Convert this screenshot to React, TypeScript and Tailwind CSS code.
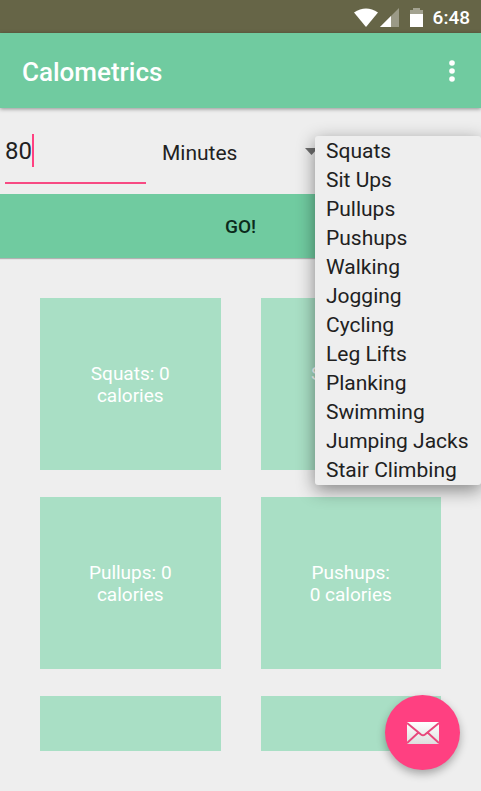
const exercises = [
  'Squats',
  'Sit Ups',
  'Pullups',
  'Pushups',
  'Walking',
  'Jogging',
  'Cycling',
  'Leg Lifts',
  'Planking',
  'Swimming',
  'Jumping Jacks',
  'Stair Climbing',
];

const tiles = [
  ['Squats: 0', 'calories'],
  ['Sit Ups: 0', 'calories'],
  ['Pullups: 0', 'calories'],
  ['Pushups:', '0 calories'],
];

function StatusBar() {
  return (
    <div className="flex h-[33px] shrink-0 items-center justify-end bg-[#666547] pt-[2px] pr-[11px] text-white">
      <svg className="h-5 w-6" viewBox="0 0 24 20" fill="currentColor" aria-hidden="true">
        <path d="M0 4.5Q12-3.5 24 4.5L12 19Z" />
      </svg>
      <svg className="ml-[2px] h-5 w-5" viewBox="0 0 20 20" fill="currentColor" aria-hidden="true">
        <path d="M0 19L19 0V19Z" opacity="0.35" />
        <path d="M0 19L11 8V19Z" />
      </svg>
      <svg className="ml-[10px] h-5 w-[13px]" viewBox="0 0 13 20" fill="currentColor" aria-hidden="true">
        <path d="M3 0H10V2H13V6H0V2H3Z" opacity="0.4" />
        <path d="M0 6H13V19H0Z" />
      </svg>
      <span className="ml-[10px] text-[19px] leading-6 font-medium">6:48</span>
    </div>
  );
}

function AppBar() {
  return (
    <header className="relative z-10 flex h-[75px] shrink-0 items-center justify-between bg-[#70cba0] pr-4 pl-[22px] text-white shadow-[0_1px_4px_rgba(0,0,0,0.4)]">
      <h1 className="pt-[2px] text-[26px] leading-8 font-medium">Calometrics</h1>
      <button type="button" aria-label="More options" className="flex h-10 w-[26px] items-center justify-center">
        <svg className="h-6 w-[6px]" viewBox="0 0 6 24" fill="currentColor" aria-hidden="true">
          <circle cx="3" cy="4" r="2.8" />
          <circle cx="3" cy="12" r="2.8" />
          <circle cx="3" cy="20" r="2.8" />
        </svg>
      </button>
    </header>
  );
}

function ExerciseMenu() {
  return (
    <ul
      role="listbox"
      aria-label="Exercise"
      className="absolute top-7 right-0 z-20 w-[166px] rounded-[3px] bg-[#eeeeee] pt-px shadow-[0_5px_18px_rgba(0,0,0,0.45)]"
    >
      {exercises.map((name) => (
        <li key={name} role="option" aria-selected={false} className="pl-[11px] text-[21px] leading-[29px] whitespace-nowrap">
          {name}
        </li>
      ))}
    </ul>
  );
}

function EntryRow() {
  return (
    <div className="relative flex h-[86px] shrink-0">
      <div className="relative flex-1 pt-[10px] pl-[5px]">
        <input
          type="text"
          aria-label="Amount"
          defaultValue="80"
          className="block h-[66px] w-full border-b-2 border-[#f74a83] bg-transparent pt-px text-[24px] leading-8 outline-none"
        />
        <span className="absolute top-[26px] left-8 h-[33px] w-[2px] bg-[#ff4081]" />
      </div>
      <div className="relative ml-[5px] w-[180px]">
        <select
          aria-label="Unit"
          className="h-[90px] w-full appearance-none bg-transparent pl-[11px] text-[21px] leading-7 outline-none"
        >
          <option>Minutes</option>
        </select>
        <svg
          className="pointer-events-none absolute top-10 right-[13px] h-[7px] w-[13px]"
          viewBox="0 0 13 7"
          fill="#6d6d6d"
          aria-hidden="true"
        >
          <path d="M0 0H13L6.500 7Z" />
        </svg>
      </div>
      <div className="w-[150px]">
        <ExerciseMenu />
      </div>
    </div>
  );
}

export default function App() {
  return (
    <div className="relative flex min-h-screen flex-col overflow-hidden bg-[#eeeeee] font-[Roboto,sans-serif] text-[#212121]">
      <StatusBar />
      <AppBar />
      <EntryRow />
      <button
        type="button"
        className="h-16 shrink-0 bg-[#70cba0] pt-[2px] text-[19px] leading-6 font-medium text-[#0b2a1b] shadow-[0_1px_1px_rgba(0,0,0,0.25)]"
      >
        GO!
      </button>
      <main className="grid grid-cols-2 gap-x-10 gap-y-[27px] px-10 pt-10 pb-10">
        {tiles.map(([first, second]) => (
          <section
            key={first}
            className="flex h-[172px] flex-col items-center justify-center bg-[#a9dfc5] pt-[2px] text-[19px] leading-[22px] text-white"
          >
            <span>{first}</span>
            <span>{second}</span>
          </section>
        ))}
        <section className="h-[55px] bg-[#a9dfc5]" />
        <section className="h-[55px] bg-[#a9dfc5]" />
      </main>
      <button
        type="button"
        aria-label="Send mail"
        className="absolute right-[21px] bottom-[21px] flex size-[75px] items-center justify-center rounded-full bg-[#ff4081] shadow-[0_4px_9px_rgba(0,0,0,0.3)]"
      >
        <svg className="h-[22px] w-8" viewBox="0 0 32 22" fill="none" aria-hidden="true">
          <defs>
            <linearGradient id="paper" x1="0" y1="0" x2="0" y2="1">
              <stop offset="0" stopColor="#ffffff" />
              <stop offset="1" stopColor="#dedede" />
            </linearGradient>
          </defs>
          <rect width="32" height="22" rx="1" fill="url(#paper)" />
          <path d="M0 1L14 12.500Q16 14 18 12.500L32 1M0 21L11.500 10.500M32 21L20.500 10.500" stroke="#e8487c" strokeWidth="2" />
        </svg>
      </button>
    </div>
  );
}
